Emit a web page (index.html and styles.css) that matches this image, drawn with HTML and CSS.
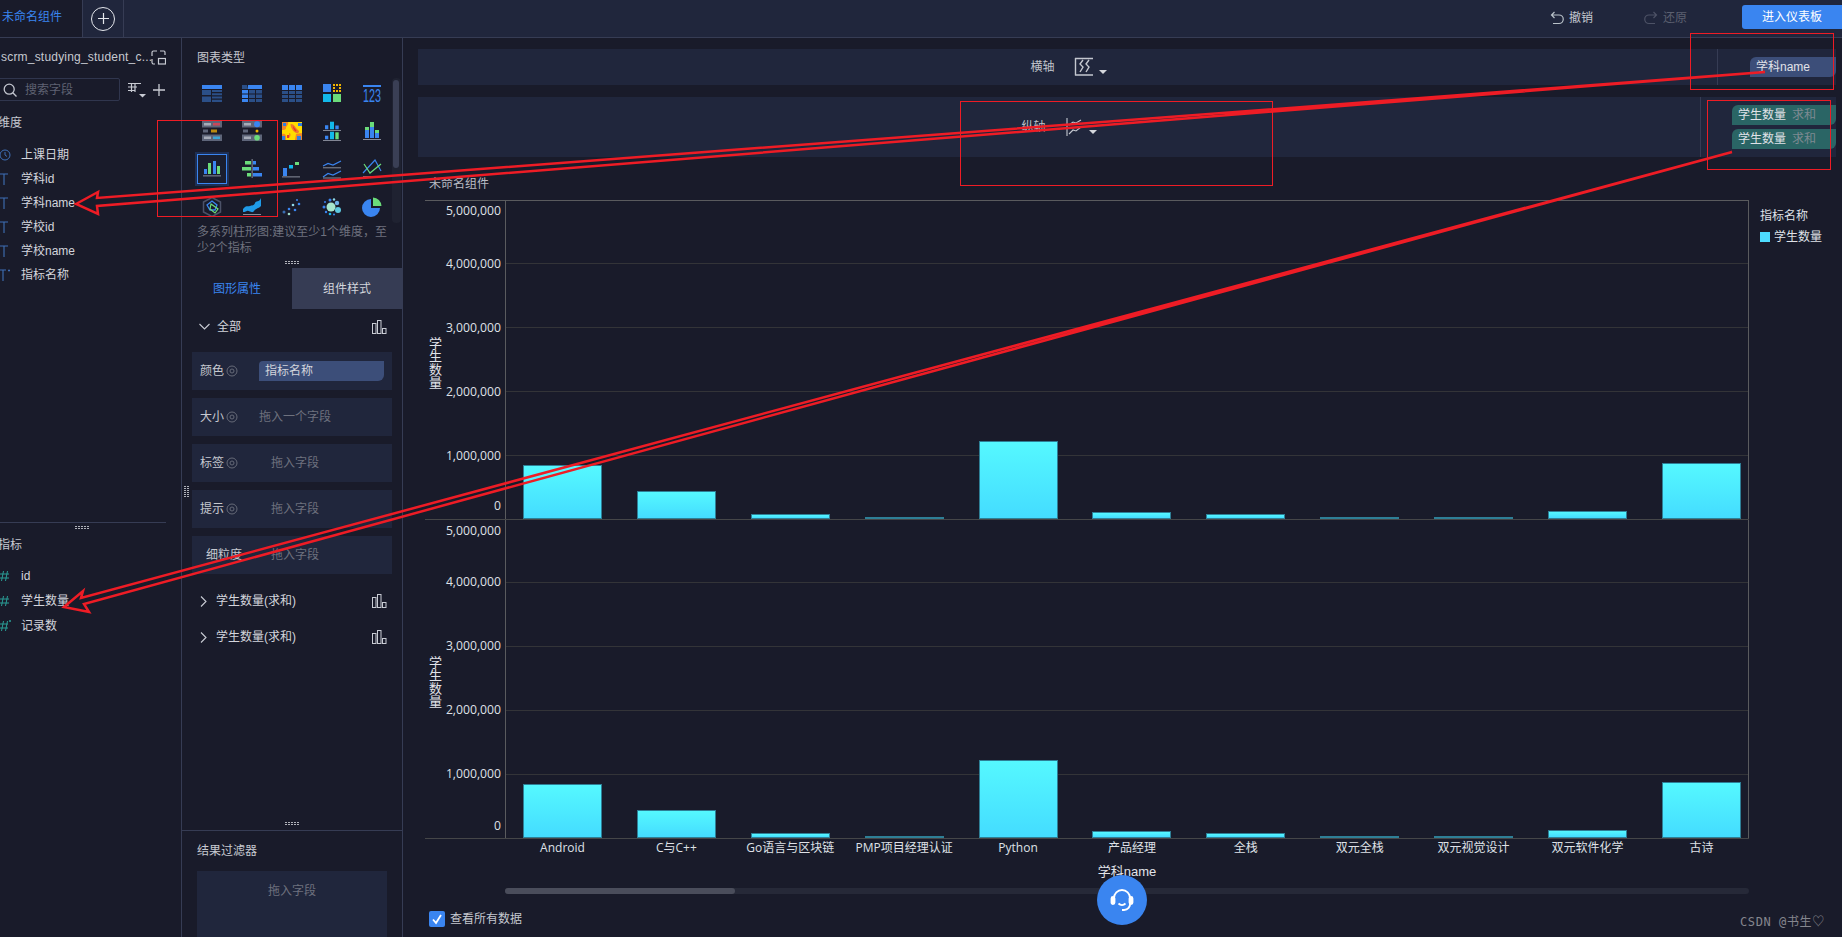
FILE: index.html
```html
<!DOCTYPE html>
<html lang="zh">
<head>
<meta charset="utf-8">
<title>未命名组件</title>
<link rel="stylesheet" href="styles.css">
</head>
<body>
<div class="app">
  <header class="topbar">
    <div class="tab-active">未命名组件</div>
    <div class="tab-add"><span class="add-circle"><svg width="11" height="11" viewBox="0 0 11 11"><path d="M5.500 0v11M0 5.500h11" stroke="#e4e6ec" stroke-width="1.200"/></svg></span></div>
    <div class="top-spacer"></div>
    <div class="top-action undo"><svg width="14" height="14" viewBox="0 0 14 14" fill="none"><path d="M4.500 1 1.500 4l3 3M1.500 4H9a3.800 3.800 0 0 1 0 8.500H3" stroke="#b9c2c9" stroke-width="1.200"/></svg><span>撤销</span></div>
    <div class="top-action redo"><svg width="14" height="14" viewBox="0 0 14 14" fill="none"><path d="M9.500 1l3 3-3 3M12.500 4H5a3.800 3.800 0 0 0 0 8.500h6" stroke="#4d5266" stroke-width="1.200"/></svg><span>还原</span></div>
    <button class="enter-btn">进入仪表板</button>
  </header>

  <div class="workspace">
    <aside class="fields">
      <div class="fields-upper">
        <div class="dataset-row">
          <span class="dataset-name">scrm_studying_student_c...</span>
          <svg width="15" height="15" viewBox="0 0 15 15" fill="none" stroke="#c9ccd4" stroke-width="1.200"><path d="M9 1h4a1.500 1.500 0 0 1 1 1.500V5M1 6V2.500A1.500 1.500 0 0 1 2.500 1H6M1 9v2.500A2 2 0 0 0 3 14h1"/><rect x="7.500" y="8.500" width="7" height="5.500"/></svg>
        </div>
        <div class="search-row">
          <div class="search-box">
            <svg width="14" height="14" viewBox="0 0 14 14" fill="none" stroke="#c3c6cf" stroke-width="1.300"><circle cx="6.200" cy="6.200" r="5"/><path d="M9.800 9.800 13.500 13.500"/></svg>
            <span>搜索字段</span>
          </div>
          <svg class="sort-icon" width="18" height="16" viewBox="0 0 18 16" fill="none" stroke="#c9ccd4" stroke-width="1.200"><path d="M0 1.500h13M0 5h9M0 8.500h7M3.500 1v9M7 1v9"/><path d="M11 12h7l-3.500 3.500z" fill="#c9ccd4" stroke="none"/></svg>
          <svg width="12" height="12" viewBox="0 0 12 12"><path d="M6 0v12M0 6h12" stroke="#c9ccd4" stroke-width="1.300"/></svg>
        </div>
        <div class="group-title dim-title">维度</div>
        <ul class="field-list dims">
          <li><svg class="fi" width="12" height="12" viewBox="0 0 12 12" fill="none" stroke="#3f6fb5" stroke-width="1"><circle cx="5" cy="6" r="5"/><path d="M5 3v3l2 1.500"/></svg>上课日期</li>
          <li><svg class="fi" width="12" height="12" viewBox="0 0 12 12" fill="none" stroke="#3f6fb5" stroke-width="1.100"><path d="M0 1h8M4 1v11"/></svg>学科id</li>
          <li><svg class="fi" width="12" height="12" viewBox="0 0 12 12" fill="none" stroke="#3f6fb5" stroke-width="1.100"><path d="M0 1h8M4 1v11"/></svg>学科name</li>
          <li><svg class="fi" width="12" height="12" viewBox="0 0 12 12" fill="none" stroke="#3f6fb5" stroke-width="1.100"><path d="M0 1h8M4 1v11"/></svg>学校id</li>
          <li><svg class="fi" width="12" height="12" viewBox="0 0 12 12" fill="none" stroke="#3f6fb5" stroke-width="1.100"><path d="M0 1h8M4 1v11"/></svg>学校name</li>
          <li><svg class="fi" width="12" height="12" viewBox="0 0 12 12" fill="none" stroke="#3f6fb5" stroke-width="1.100"><path d="M0 1h6M3 1v11M9 .500v2M8 1.500h2"/></svg>指标名称</li>
        </ul>
      </div>
      <div class="grip grip-fields"></div>
      <div class="group-title measure-title">指标</div>
      <ul class="field-list measures">
        <li><svg class="fi" width="12" height="12" viewBox="0 0 12 12" fill="none" stroke="#2a9d96" stroke-width="1"><path d="M3.500 1 1.500 11M7.500 1l-2 10M0 4h9M0 8h9"/></svg>id</li>
        <li><svg class="fi" width="12" height="12" viewBox="0 0 12 12" fill="none" stroke="#2a9d96" stroke-width="1"><path d="M3.500 1 1.500 11M7.500 1l-2 10M0 4h9M0 8h9"/></svg>学生数量</li>
        <li><svg class="fi" width="12" height="12" viewBox="0 0 12 12" fill="none" stroke="#2a9d96" stroke-width="1"><path d="M3.500 1 1.500 11M7.500 1l-2 10M0 4h8M0 8h8M10 0v2M9 1h2"/></svg>记录数</li>
      </ul>
    </aside>

    <section class="config">
      <div class="grip-v"></div>
      <div class="config-title">图表类型</div>
      <div class="chart-types">
        <div class="ct"><svg width="20" height="20" viewBox="0 0 20 20"><rect y="2" width="20" height="4" fill="#3a85f0"/><path d="M0 7h9v5H0zM0 13.500h9V19H0z" fill="#2b4f87"/><path d="M10 7h10v2H10zM10 10.300h10v2H10zM10 13.500h10v2H10zM10 16.800h10V19H10z" fill="#2b4f87"/></svg></div>
        <div class="ct"><svg width="20" height="20" viewBox="0 0 20 20"><path d="M0 2h5l1 4H0z" fill="#2b4f87"/><rect x="6" y="2" width="14" height="4" fill="#3a85f0"/><path d="M0 7h6v3.500H0zM0 11.500h6V15H0zM0 16h6v3H0z" fill="#3a85f0"/><path d="M7 7h6v3.500H7zM14 7h6v3.500h-6zM7 11.500h6V15H7zM14 11.500h6V15h-6zM7 16h6v3H7zM14 16h6v3h-6z" fill="#2b4f87"/></svg></div>
        <div class="ct"><svg width="20" height="20" viewBox="0 0 20 20"><path d="M0 2h6v5H0zM7 2h6v5H7zM14 2h6v5h-6z" fill="#3a85f0"/><path d="M0 8h6v3H0zM7 8h6v3H7zM14 8h6v3h-6zM0 12h6v3H0zM7 12h6v3H7zM14 12h6v3h-6zM0 16h6v3H0zM7 16h6v3H7zM14 16h6v3h-6z" fill="#2b4f87"/></svg></div>
        <div class="ct"><svg width="20" height="20" viewBox="0 0 20 20"><rect x="1" y="1" width="8" height="8" fill="#3a85f0"/><rect x="1" y="11" width="8" height="8" fill="#12b8ea"/><rect x="11" y="11" width="8" height="8" fill="#6bdc7a"/><path d="M11 1h2v2h-2zM14 1h2v2h-2zM17 1h2v2h-2zM11 4h2v2h-2zM17 4h2v2h-2zM11 7h2v2h-2zM14 7h2v2h-2zM17 7h2v2h-2z" fill="#f0b400"/></svg></div>
        <div class="ct"><svg width="20" height="26" viewBox="0 -3 20 26"><rect x="1" y="2" width="18" height="2" fill="#3a85f0"/><text class="num-icon" x="1" y="19" textLength="18" lengthAdjust="spacingAndGlyphs">123</text></svg></div>

        <div class="ct"><svg width="20" height="20" viewBox="0 0 20 20"><path d="M0 0h20v6.500H0zM0 13.500h20V20H0z" fill="#5e6579"/><path d="M2 2h7v2.500H2zM2 15.500h7V18H2z" fill="#a5abb8"/><path d="M11 2h7v2.500h-7z" fill="#c9485a"/><path d="M11 15.500h7V18h-7z" fill="#3aa6d8"/><rect x="1" y="8.500" width="5" height="3" fill="#5e6579"/><rect x="9" y="8.500" width="6" height="3" fill="#b98a10"/></svg></div>
        <div class="ct"><svg width="20" height="20" viewBox="0 0 20 20"><path d="M0 0h20v6.500H0zM0 13.500h20V20H0z" fill="#5e6579"/><path d="M2 2h7v2.500H2zM2 15.500h7V18H2z" fill="#a5abb8"/><circle cx="15" cy="3.200" r="3" fill="#3a85f0"/><circle cx="15" cy="16.800" r="2.800" fill="#6bdc7a"/><rect x="1" y="8.500" width="5" height="3" fill="#5e6579"/><circle cx="15" cy="10" r="1.500" fill="#f0b400"/></svg></div>
        <div class="ct"><svg width="20" height="20" viewBox="0 0 20 20"><rect y="1" width="20" height="18" fill="#ffdc00"/><path d="M0 1h6c1 3-2 4-2 6s-3 2-4 2zM0 13c3-1 4 1 4 3v3H0zM14 13c3 0 6-2 6 0v6h-7zM7 12c2 0 2 3 0 5z" fill="#f0862a"/><path d="M9 3c3 0 4 3 6 5s3 3 1 4-5-2-6-4-2-5-1-5z" fill="#f2792b"/><path d="M1 2h3v3H1zM0 15h3v4H0zM15 15h4v4h-4zM16 2h4v3h-4z" fill="#2f7fe0"/><path d="M11 5c1 1 2 3 3 4s0 2-1 1-2-3-2-5zM5 14h2v3H5z" fill="#e6352a"/></svg></div>
        <div class="ct"><svg width="20" height="20" viewBox="0 0 20 20"><path d="M3 4.300h3.300v4H3zM13.300 4.500h3.400v3.800h-3.400z" fill="#3a85f0"/><path d="M8 .7h4v7.600H8z" fill="#12b8ea"/><path d="M3 14.700h3.300v3.600H3z" fill="#3a85f0"/><path d="M8 10.700h4v7.600H8z" fill="#12b8ea"/><path d="M13.300 11.300h3.400v7h-3.400z" fill="#6bdc7a"/><path d="M1 9.200h18v.800H1zM1 19.300h18v.700H1z" fill="#a5abb8"/></svg></div>
        <div class="ct"><svg width="20" height="20" viewBox="0 0 20 20"><path d="M3 9h4v8H3zM8 6h4v11H8zM13 12h4v5h-4z" fill="#3a85f0"/><path d="M3 6h4v3H3zM8 1h4v5H8zM13 9h4v3h-4z" fill="#6bdc7a"/><path d="M1 18h18v.800H1z" fill="#a5abb8"/></svg></div>

        <div class="ct ct-selected"><div class="ct-frame"><svg width="20" height="20" viewBox="0 0 20 20"><path d="M2 10h3v5H2zM11 2h3v13h-3z" fill="#3a85f0"/><path d="M6 4h3v11H6zM15 7h3v8h-3z" fill="#6bdc7a"/><path d="M1 16.500h18v.800H1z" fill="#a5abb8"/></svg></div></div>
        <div class="ct"><svg width="20" height="20" viewBox="0 0 20 20"><path d="M3 2h6v3.500H3zM0 8h9v3.500H0zM5 14h4v3.500H5z" fill="#6bdc7a"/><path d="M11 2h3v3.500h-3zM11 8h6v3.500h-6zM11 14h9v3.500h-9z" fill="#3a85f0"/><path d="M9.700 0h.800v19h-.800z" fill="#a5abb8"/></svg></div>
        <div class="ct"><svg width="20" height="20" viewBox="0 0 20 20"><rect x="1" y="9" width="4" height="8" fill="#3a85f0"/><rect x="7" y="6" width="4" height="3.500" fill="#12b8ea"/><rect x="13" y="3" width="4" height="3" fill="#6bdc7a"/><rect y="17.500" width="18" height=".8" fill="#a5abb8"/></svg></div>
        <div class="ct"><svg width="20" height="20" viewBox="0 0 20 20" fill="none"><path d="M1 7l5-2.500 5 1.500 8-4" stroke="#3a85f0" stroke-width="1.200"/><path d="M1 8.800h18M1 19h18" stroke="#a5abb8" stroke-width=".8"/><path d="M1 18l5-3.500 5 1.500 8-4" stroke="#3a85f0" stroke-width="1.200"/></svg></div>
        <div class="ct"><svg width="20" height="20" viewBox="0 0 20 20" fill="none"><path d="M1 14 13 1l6 11" stroke="#3a85f0" stroke-width="1.200"/><path d="M2 5l6 9L19 5" stroke="#6bdc7a" stroke-width="1.200"/><path d="M1 17.700h18" stroke="#a5abb8" stroke-width=".8"/></svg></div>

        <div class="ct"><svg width="20" height="20" viewBox="0 0 20 20" fill="none"><path d="M10 .500 18.500 5v10L10 19.500 1.500 15V5z" stroke="#4c5268" stroke-width="1.500"/><path d="M5 8l5-4 5 4-2 5H8z" stroke="#3a85f0" stroke-width="1.300"/><path d="M8 12l1-5 7 5-3 4z" stroke="#6bdc7a" stroke-width="1.200"/></svg></div>
        <div class="ct"><svg width="20" height="20" viewBox="0 0 20 20"><path d="M1 12C4 8 6 10 8 9s4 0 5-3 4 0 6-5v8c-3 3-5 2-7 5s-5-1-7 0-3 1-4 1z" fill="#1f9be8"/><path d="M1 17.500h18" stroke="#a5abb8" stroke-width=".8"/></svg></div>
        <div class="ct"><svg width="20" height="20" viewBox="0 0 20 20"><circle cx="2" cy="15" r="1.500" fill="#3a6cb0"/><circle cx="7" cy="12" r="1.300" fill="#3a85f0"/><circle cx="7" cy="17" r="1.300" fill="#9edbc8"/><circle cx="11" cy="8" r="1.300" fill="#8fd8e8"/><circle cx="13" cy="13" r="1.300" fill="#3a85f0"/><circle cx="17" cy="7" r="1.300" fill="#3a85f0"/><circle cx="15" cy="3" r="1" fill="#3a85f0"/></svg></div>
        <div class="ct"><svg width="20" height="20" viewBox="0 0 20 20"><circle cx="9" cy="10" r="4.500" fill="#a6e6cc"/><circle cx="16" cy="13" r="3" fill="#5ec8e0"/><circle cx="15" cy="6" r="2.200" fill="#6fb0e8"/><circle cx="8" cy="3" r="1.500" fill="#3a85f0"/><circle cx="12" cy="2.500" r="1.200" fill="#8fd8e8"/><circle cx="2" cy="10" r="1.500" fill="#3a85f0"/><circle cx="3" cy="5" r="1" fill="#3a85f0"/><circle cx="4" cy="15" r="1.200" fill="#3a85f0"/><circle cx="8" cy="17" r="1.300" fill="#12b8ea"/><circle cx="12" cy="17.500" r="1" fill="#3a85f0"/></svg></div>
        <div class="ct"><svg width="20" height="20" viewBox="0 0 20 20"><path d="M9 2a9 9 0 1 0 9 9H9z" fill="#3a85f0"/><path d="M11 0.500a9 9 0 0 1 8.500 8.500H11z" fill="#6bdc7a"/></svg></div>
        <div class="ct-track"><div class="ct-thumb"></div></div>
      </div>
      <p class="chart-desc">多系列柱形图:建议至少1个维度，至少2个指标</p>
      <div class="grip grip-desc"></div>
      <div class="tabs">
        <div class="tab tab-on">图形属性</div>
        <div class="tab tab-off">组件样式</div>
      </div>
      <div class="sect sect-all">
        <svg width="11" height="8" viewBox="0 0 11 8" fill="none"><path d="M.500 1 5.500 6l5-5" stroke="#c9ccd4" stroke-width="1.100"/></svg>
        <span class="sect-name">全部</span>
        <svg class="mini-bars" width="15" height="14" viewBox="0 0 15 14" fill="none" stroke="#c9ccd4"><rect x=".500" y="3.500" width="3.500" height="10"/><rect x="5.500" y=".5" width="3.500" height="13"/><rect x="10.500" y="8.500" width="3.500" height="5"/></svg>
      </div>
      <div class="shelves">
        <div class="shelf"><span class="shelf-label">颜色</span><svg class="gear" width="12" height="12" viewBox="0 0 12 12" fill="none" stroke="#666a78"><circle cx="6" cy="6" r="5"/><circle cx="6" cy="6" r="2"/></svg><span class="shelf-pill">指标名称</span></div>
        <div class="shelf"><span class="shelf-label">大小</span><svg class="gear" width="12" height="12" viewBox="0 0 12 12" fill="none" stroke="#666a78"><circle cx="6" cy="6" r="5"/><circle cx="6" cy="6" r="2"/></svg><span class="shelf-hint">拖入一个字段</span></div>
        <div class="shelf"><span class="shelf-label">标签</span><svg class="gear" width="12" height="12" viewBox="0 0 12 12" fill="none" stroke="#666a78"><circle cx="6" cy="6" r="5"/><circle cx="6" cy="6" r="2"/></svg><span class="shelf-hint hint-far">拖入字段</span></div>
        <div class="shelf"><span class="shelf-label">提示</span><svg class="gear" width="12" height="12" viewBox="0 0 12 12" fill="none" stroke="#666a78"><circle cx="6" cy="6" r="5"/><circle cx="6" cy="6" r="2"/></svg><span class="shelf-hint hint-far">拖入字段</span></div>
        <div class="shelf shelf-detail"><span class="shelf-label">细粒度</span><span class="shelf-hint hint-detail">拖入字段</span></div>
      </div>
      <div class="sect sect-first">
        <svg width="8" height="11" viewBox="0 0 8 11" fill="none"><path d="M1 .500 6 5.500l-5 5" stroke="#c9ccd4" stroke-width="1.100"/></svg>
        <span class="sect-name">学生数量(求和)</span>
        <svg class="mini-bars" width="15" height="14" viewBox="0 0 15 14" fill="none" stroke="#c9ccd4"><rect x=".500" y="3.500" width="3.500" height="10"/><rect x="5.500" y=".5" width="3.500" height="13"/><rect x="10.500" y="8.500" width="3.500" height="5"/></svg>
      </div>
      <div class="sect sect-next">
        <svg width="8" height="11" viewBox="0 0 8 11" fill="none"><path d="M1 .500 6 5.500l-5 5" stroke="#c9ccd4" stroke-width="1.100"/></svg>
        <span class="sect-name">学生数量(求和)</span>
        <svg class="mini-bars" width="15" height="14" viewBox="0 0 15 14" fill="none" stroke="#c9ccd4"><rect x=".500" y="3.500" width="3.500" height="10"/><rect x="5.500" y=".5" width="3.500" height="13"/><rect x="10.500" y="8.500" width="3.500" height="5"/></svg>
      </div>
      <div class="filter-wrap">
        <div class="grip grip-filter"></div>
        <div class="filter">
          <div class="filter-title">结果过滤器</div>
          <div class="filter-drop">拖入字段</div>
        </div>
      </div>
    </section>

    <main class="canvas">
      <div class="axis-row axis-row-x">
        <div class="axis-mid">
          <span class="axis-label">横轴</span>
          <svg class="axis-ico" width="20" height="20" viewBox="0 0 20 20" fill="none" stroke="#c4c7cf" stroke-width="1.400"><path d="M1 1.500h18M1 18h18M1.500 1v17.500M9 3 6 7l3 3-3 5M15 3l-3 4 3 3-3 5"/></svg>
          <span class="caret"></span>
        </div>
        <div class="axis-fields axis-fields-x"><span class="pill pill-dim">学科name</span></div>
      </div>
      <div class="axis-row axis-row-y">
        <div class="axis-mid">
          <span class="axis-label">纵轴</span>
          <svg class="axis-ico" width="18" height="18" viewBox="0 0 18 18" fill="none" stroke="#c4c7cf" stroke-width="1.100"><path d="M1 0v18M3 7l4-3 3 1 5-3M3 16l4-4 3 1 5-4"/></svg>
          <span class="caret"></span>
        </div>
        <div class="axis-fields axis-fields-y">
          <span class="pill pill-measure">学生数量<em>求和</em></span>
          <span class="pill pill-measure">学生数量<em>求和</em></span>
        </div>
      </div>

      <div class="widget-title">未命名组件</div>
      <div class="chart-row">
        <div class="plots">
          <div class="panel panel-top">
            <div class="yaxis">
              <div class="ytitle">学生数量</div>
              <div class="ticks">
                <div class="tick">5,000,000</div><div class="tick">4,000,000</div><div class="tick">3,000,000</div><div class="tick">2,000,000</div><div class="tick">1,000,000</div><div class="tick">0</div>
              </div>
            </div>
            <div class="plot">
              <div class="bar" style="height:54px"></div><div class="bar" style="height:28px"></div><div class="bar" style="height:5px"></div><div class="bar thin" style="height:2px"></div><div class="bar" style="height:78px"></div><div class="bar" style="height:7px"></div><div class="bar" style="height:5px"></div><div class="bar thin" style="height:2px"></div><div class="bar thin" style="height:2px"></div><div class="bar" style="height:8px"></div><div class="bar" style="height:56px"></div>
            </div>
          </div>
          <div class="panel panel-bottom">
            <div class="yaxis">
              <div class="ytitle">学生数量</div>
              <div class="ticks">
                <div class="tick">5,000,000</div><div class="tick">4,000,000</div><div class="tick">3,000,000</div><div class="tick">2,000,000</div><div class="tick">1,000,000</div><div class="tick">0</div>
              </div>
            </div>
            <div class="plot">
              <div class="bar" style="height:54px"></div><div class="bar" style="height:28px"></div><div class="bar" style="height:5px"></div><div class="bar thin" style="height:2px"></div><div class="bar" style="height:78px"></div><div class="bar" style="height:7px"></div><div class="bar" style="height:5px"></div><div class="bar thin" style="height:2px"></div><div class="bar thin" style="height:2px"></div><div class="bar" style="height:8px"></div><div class="bar" style="height:56px"></div>
            </div>
          </div>
          <div class="xlabels">
            <span>Android</span><span>C与C++</span><span>Go语言与区块链</span><span>PMP项目经理认证</span><span>Python</span><span>产品经理</span><span>全栈</span><span>双元全栈</span><span>双元视觉设计</span><span>双元软件化学</span><span>古诗</span>
          </div>
          <div class="xtitle">学科name</div>
          <div class="hscroll"><div class="hthumb"></div></div>
        </div>
        <aside class="legend">
          <div class="legend-title">指标名称</div>
          <div class="legend-item"><i class="swatch"></i>学生数量</div>
        </aside>
      </div>
      <label class="see-all"><span class="check"><svg width="12" height="12" viewBox="0 0 12 12" fill="none"><path d="M2 6.500 5 10l5-8" stroke="#fff" stroke-width="1.800"/></svg></span>查看所有数据</label>
    </main>
  </div>

  <div class="help-btn"><svg width="30" height="30" viewBox="0 0 30 30" fill="none" stroke="#fff" stroke-width="1.800"><path d="M7 15V13a8 8 0 0 1 16 0v5a6 6 0 0 1-6 7h-2"/><rect x="4.500" y="12" width="3" height="7" rx="1.500" fill="#fff"/><rect x="22.500" y="12" width="3" height="7" rx="1.500" fill="#fff"/><path d="M11.500 18.500c2 2 5 2 7 0"/></svg></div>
  <div class="watermark">CSDN @书生<span class="heart">♡</span></div>

  <svg class="annotations" width="1842" height="937" viewBox="0 0 1842 937" fill="none" stroke="#ee1c25">
    <rect x="157.500" y="120.500" width="120" height="96" stroke-width="1"/>
    <rect x="960.500" y="101.500" width="312" height="84" stroke-width="1"/>
    <rect x="1690.500" y="33.500" width="143" height="56" stroke-width="1"/>
    <rect x="1707.500" y="100.500" width="123" height="69" stroke-width="1"/>
    <path d="M76 204 98 192 97 198 1765 72 97 206 98 214Z" stroke-width="2.500"/>
    <path d="M64 607 83 591 81 598 1732 152 84 604 89 612Z" stroke-width="2.500"/>
  </svg>
</div>
</body>
</html>
```

FILE: styles.css
```css
* { box-sizing: border-box; }
html, body { margin: 0; padding: 0; }
body {
  background: #191b2a;
  color: #d3d5dc;
  font: 12px/16px "Liberation Sans", "Noto Sans CJK SC", sans-serif;
}
ul { list-style: none; margin: 0; padding: 0; }
p { margin: 0; }
svg { display: block; flex-shrink: 0; }

.app { position: relative; width: 1842px; height: 937px; overflow: hidden; display: flex; flex-direction: column; }

/* top bar */
.topbar { height: 38px; flex-shrink: 0; display: flex; align-items: stretch; background: #20263c; border-bottom: 1px solid #363c54; }
.tab-active { width: 83px; padding-left: 2px; line-height: 35px; color: #3a85f0; background: #191b2a; border-right: 1px solid #363c54; }
.tab-add { width: 41px; display: flex; align-items: center; justify-content: center; border-right: 1px solid #363c54; }
.add-circle { width: 24px; height: 24px; border: 1px solid #e4e6ec; border-radius: 50%; display: flex; align-items: center; justify-content: center; }
.top-spacer { flex: 1; }
.top-action { display: flex; align-items: center; gap: 5px; padding-bottom: 2px; }
.undo { color: #c4c9d0; margin-right: 51px; }
.redo { color: #5c6070; margin-right: 55px; }
.enter-btn { width: 100px; height: 24px; margin-top: 5px; padding: 0; border: 0; border-radius: 3px 0 0 3px; background: #3a85f0; color: #fff; font: inherit; }

.workspace { flex: 1; display: flex; min-height: 0; }

/* fields */
.fields { width: 182px; flex-shrink: 0; border-right: 1px solid #363c54; overflow: hidden; }
.fields-upper { width: 166px; height: 485px; padding-top: 9px; border-bottom: 1px solid #363c54; }
.dataset-row { display: flex; align-items: center; height: 20px; padding-left: 1px; color: #c6c9d0; font-size: 12px; }
.dataset-name { width: 150px; white-space: nowrap; letter-spacing: .2px; }
.search-row { display: flex; align-items: center; margin-top: 11px; }
.search-box { width: 122px; height: 23px; margin-left: -2px; padding-left: 4px; display: flex; align-items: center; gap: 8px; border: 1px solid #30364e; border-radius: 2px; color: #5f6272; }
.sort-icon { margin: 0 7px 0 8px; }
.group-title { margin-left: -2px; color: #c6c9d0; }
.dim-title { margin-top: 14px; }
.field-list li { display: flex; align-items: center; gap: 9px; color: #d3d5dc; white-space: nowrap; }
.dims { margin-top: 12px; }
.dims li { height: 24px; }
.measures { margin-top: 10px; }
.measures li { height: 25px; }
.grip { width: 14px; height: 4px; background-image: repeating-linear-gradient(0deg, #191b2a 0 1px, transparent 1px 2px), repeating-linear-gradient(90deg, #b0b2ba 0 2px, transparent 2px 3px); }
.grip-fields { margin: 3px 0 0 75px; }
.measure-title { margin-top: 7px; }

/* config */
.config { position: relative; width: 221px; flex-shrink: 0; display: flex; flex-direction: column; border-right: 1px solid #363c54; }
.grip-v { position: absolute; left: 2px; top: 448px; width: 5px; height: 12px; background-image: repeating-linear-gradient(0deg, #191b2a 0 1px, transparent 1px 2px), repeating-linear-gradient(90deg, #b0b2ba 0 2px, transparent 2px 3px); }
.config-title { margin: 12px 0 0 15px; color: #c6c9d0; }
.chart-types { position: relative; width: 210px; margin: 8px 0 0 10px; display: grid; grid-template-columns: repeat(5, 40px); grid-auto-rows: 38px; }
.ct { display: flex; align-items: center; justify-content: center; }
.ct-frame { width: 34px; height: 34px; display: flex; align-items: center; justify-content: center; background: #1a1e30; border: 2px solid #1e2f54; box-shadow: inset 0 0 0 1px #3a85f0; }
.num-icon { font: 18px "Liberation Sans", sans-serif; fill: #3a85f0; }
.ct-track { position: absolute; left: 200px; top: 4px; width: 9px; height: 145px; background: #1f2231; border-radius: 4px; }
.ct-thumb { width: 6px; height: 88px; margin: 2px 0 0 1px; background: #3a3f55; border-radius: 3px; }
.chart-desc { width: 195px; margin: -2px 0 0 15px; color: #6e717e; }
.grip-desc { margin: 5px 0 0 103px; }
.tabs { display: flex; height: 41px; margin-top: 3px; }
.tab { flex: 1; display: flex; align-items: center; justify-content: center; }
.tab-on { color: #3a85f0; }
.tab-off { background: #363c54; color: #d3d5dc; }
.sect { display: flex; align-items: center; height: 16px; padding-left: 18px; color: #d3d5dc; }
.sect-name { margin-left: 8px; }
.mini-bars { margin-left: auto; margin-right: 15px; }
.sect-all { margin-top: 10px; padding-left: 17px; }
.sect-all .sect-name { margin-left: 7px; }
.sect-first { margin-top: 19px; }
.sect-next { margin-top: 20px; }
.shelves { display: flex; flex-direction: column; gap: 8px; margin: 17px 0 0 10px; width: 200px; }
.shelf { height: 38px; display: flex; align-items: center; padding-left: 8px; background: #20263c; }
.shelf-label { color: #c6c9d0; }
.gear { margin-left: 2px; }
.shelf-pill { width: 125px; height: 20px; margin-left: 21px; padding-left: 6px; line-height: 20px; background: #3c4e79; color: #d3d5dc; border-radius: 4px 0 6px 0; }
.shelf-hint { margin-left: 21px; color: #6e717e; }
.hint-far { margin-left: 33px; }
.shelf-detail { padding-left: 14px; }
.hint-detail { margin-left: 29px; }
.filter-wrap { margin-top: auto; }
.grip-filter { margin: 0 0 4px 103px; }
.filter { height: 107px; border-top: 1px solid #363c54; padding: 12px 15px 0; }
.filter-title { color: #c6c9d0; }
.filter-drop { height: 80px; margin-top: 12px; padding-top: 12px; text-align: center; color: #6e717e; background: #20263c; }

/* canvas */
.canvas { flex: 1; min-width: 0; padding: 11px 6px 0 15px; }
.axis-row { display: flex; background: #20263c; }
.axis-row-x { height: 36px; }
.axis-row-y { height: 60px; margin-top: 12px; }
.axis-mid { flex: 1; display: flex; align-items: center; justify-content: center; color: #bfc2ca; }
.axis-label { margin-right: 20px; }
.axis-row-x .axis-label { margin: 0 19px 0 2px; }
.caret { width: 0; height: 0; margin: 10px 0 0 5px; border: 4px solid transparent; border-top: 4px solid #d5d7dd; border-bottom: 0; }
.axis-fields { display: flex; flex-direction: column; align-items: flex-end; padding-top: 8px; border-left: 1px solid #363c54; }
.axis-fields-x { width: 119px; }
.axis-fields-y { width: 136px; gap: 4px; }
.pill { height: 20px; line-height: 20px; padding-left: 6px; white-space: nowrap; color: #e0e2e8; border-radius: 6px 0 6px 0; }
.pill-dim { width: 86px; background: #3c4e79; }
.pill-measure { width: 104px; background: #2a6565; }
.pill em { margin-left: 6px; font-style: normal; color: #7e8a92; }
.widget-title { margin: 19px 0 0 11px; color: #b9bcc4; }
.chart-row { display: flex; margin: 8px 0 0 7px; }
.plots { width: 1324px; flex-shrink: 0; }
.panel { display: flex; border-bottom: 1px solid #454648; }
.panel-top { height: 320px; border-top: 1px solid #5a5b5e; }
.panel-bottom { height: 319px; }
.yaxis { width: 80px; flex-shrink: 0; display: flex; }
.ytitle { width: 13px; margin: 5px 0 0 3px; align-self: center; writing-mode: vertical-rl; text-orientation: upright; font-size: 13px; line-height: 13px; color: #e2e4ea; }
.ticks { flex: 1; padding: 2px 4px 0 0; text-align: right; color: #dfe1e7; font-family: "Open Sans", "Liberation Sans", sans-serif; font-size: 12.2px; }
.tick { height: 16px; margin-bottom: 48px; }
.tick:first-child { margin-bottom: 37px; }
.tick:nth-child(5) { margin-bottom: 34px; }
.panel-bottom .ticks { padding-top: 3px; }
.panel-bottom .tick:first-child { margin-bottom: 35px; }
.panel-bottom .tick:nth-child(5) { margin-bottom: 36px; }
.plot { flex: 1; display: flex; align-items: flex-end; justify-content: space-between; padding: 0 7px 0 17px; border-left: 1px solid #5a5b5e; border-right: 1px solid #5a5b5e; background: repeating-linear-gradient(to top, transparent 0 63px, #333438 63px 64px); }
.bar { width: 79px; border: 1px solid #2e7f96; background: linear-gradient(#55f8ff, #44dcff); }
.bar.thin { background: #2e7f96; }
.xlabels { display: flex; justify-content: space-between; margin: 1px 0 0 80px; padding: 0 8px 0 18px; color: #dfe1e7; font-family: "Open Sans", "Noto Sans CJK SC", sans-serif; }
.xlabels span { width: 79px; display: flex; justify-content: center; white-space: nowrap; }
.xtitle { margin: 8px 0 0 80px; text-align: center; color: #e2e4ea; font-size: 13px; }
.hscroll { height: 6px; margin: 8px 0 0 80px; border-radius: 3px; background: #262938; }
.hthumb { width: 230px; height: 6px; border-radius: 3px; background: #4a4d5b; }
.legend { margin-left: 11px; padding-top: 8px; color: #dfe1e7; }
.legend-item { display: flex; align-items: center; gap: 4px; margin-top: 5px; }
.swatch { width: 10px; height: 10px; background: #4ddcff; }
.see-all { display: flex; align-items: center; gap: 5px; margin: 17px 0 0 11px; color: #c6c9d0; }
.check { width: 16px; height: 16px; display: flex; align-items: center; justify-content: center; border-radius: 2px; background: #3a85f0; }

/* overlays */
.help-btn { position: absolute; left: 1097px; top: 875px; width: 50px; height: 50px; display: flex; align-items: center; justify-content: center; border-radius: 50%; background: #3a85f0; }
.watermark { position: absolute; left: 1740px; top: 913px; color: #85868e; font-family: "DejaVu Sans Mono", "Noto Sans CJK SC", monospace; font-size: 12px; letter-spacing: .6px; white-space: nowrap; }
.heart { font-family: "Noto Sans CJK SC", sans-serif; letter-spacing: 0; }
.annotations { position: absolute; left: 0; top: 0; pointer-events: none; }
```
